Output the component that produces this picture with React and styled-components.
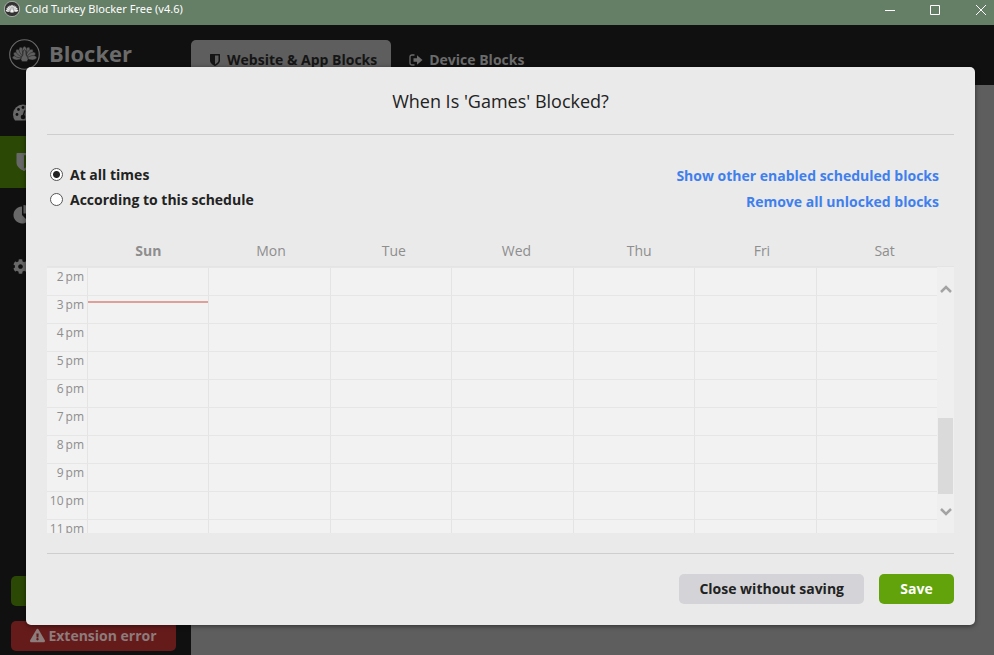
import React, { useState } from 'react';
import styled, { createGlobalStyle } from 'styled-components';
import { FaCog, FaExclamationTriangle } from 'react-icons/fa';

const GlobalStyle = createGlobalStyle`
  * { box-sizing: border-box; }
  body {
    margin: 0;
    font-family: 'Open Sans', 'Noto Sans', sans-serif;
    font-size: 14px;
    background: #5e5e5e;
  }
  button { font: inherit; border: 0; padding: 0; cursor: pointer; }
`;

const S = {
  Window: styled.div`
    display: flex;
    flex-direction: column;
    min-height: 100vh;
  `,
  TitleBar: styled.header`
    display: flex;
    align-items: center;
    height: 25px;
    padding: 0 6px 7px 4px;
    background: #657e66;
    color: #fff;
    font-family: 'Noto Sans', 'Open Sans', sans-serif;
    font-size: 11px;
  `,
  AppName: styled.span`
    flex: 1;
    margin-left: 5px;
    line-height: 18px;
  `,
  WindowButtons: styled.div`
    display: flex;
    gap: 31px;
  `,
  WindowButton: styled.button`
    display: flex;
    width: 14px;
    height: 14px;
    background: none;
    color: #fff;
  `,
  Body: styled.div`
    position: relative;
    display: flex;
    flex: 1;
  `,
  Sidebar: styled.aside`
    display: flex;
    flex-direction: column;
    width: 191px;
    background: #101010;
  `,
  Brand: styled.div`
    display: flex;
    align-items: center;
    gap: 9px;
    height: 59px;
    padding-left: 9px;
    color: #6b6b6b;
    font-size: 22px;
    font-weight: 700;
  `,
  BrandName: styled.span`
    padding-bottom: 4px;
  `,
  NavItem: styled.button`
    display: flex;
    align-items: center;
    height: 52px;
    padding-left: ${({ $active }) => ($active ? 16 : 13)}px;
    background: ${({ $active }) => ($active ? '#2b4804' : 'none')};
    color: #686868;
  `,
  SideActions: styled.div`
    display: flex;
    flex-direction: column;
    gap: 15px;
    margin-top: auto;
    padding: 16px 15px 4px 11px;
  `,
  SideButton: styled.button`
    display: flex;
    align-items: center;
    justify-content: center;
    gap: 3px;
    height: 30px;
    padding-bottom: 2px;
    border-radius: 5px;
    background: ${({ $danger }) => ($danger ? '#661b1b' : '#2b4804')};
    color: #8d7c7c;
    font-weight: 700;
  `,
  Main: styled.main`
    flex: 1;
  `,
  Tabs: styled.nav`
    display: flex;
    align-items: flex-end;
    height: 60px;
    background: #101010;
  `,
  Tab: styled.button`
    display: flex;
    align-items: center;
    gap: 6px;
    height: 45px;
    padding: 0 14px 6px 18px;
    border-radius: 5px 5px 0 0;
    background: ${({ $active }) => ($active ? '#5e5e5e' : 'none')};
    color: ${({ $active }) => ($active ? '#151515' : '#6b6b6b')};
    font-weight: 700;
  `,
  Overlay: styled.div`
    position: absolute;
    inset: 0;
    padding: 42px 19px 30px 26px;
  `,
  Modal: styled.section`
    padding: 0 21px 21px;
    border-radius: 5px;
    background: #eaeaea;
    box-shadow: 0 1px 5px rgba(0, 0, 0, 0.5);
    color: #222;
  `,
  Title: styled.h1`
    margin: 0;
    height: 68px;
    border-bottom: 1px solid #cecece;
    font-size: 18px;
    font-weight: 400;
    line-height: 68px;
    text-align: center;
  `,
  Options: styled.div`
    display: flex;
    justify-content: space-between;
    padding: 27px 15px 24px 3px;
    font-weight: 700;
  `,
  Choices: styled.div`
    display: flex;
    flex-direction: column;
  `,
  Choice: styled.label`
    display: flex;
    align-items: center;
    gap: 7px;
    line-height: 25px;
  `,
  Radio: styled.input`
    appearance: none;
    width: 13px;
    height: 13px;
    margin: 0;
    border: 1px solid #555;
    border-radius: 50%;
    background: #fff;
    &:checked {
      background: radial-gradient(circle, #222 0 3px, #fff 4px);
    }
  `,
  Links: styled.div`
    display: flex;
    flex-direction: column;
    align-items: flex-end;
    padding-top: 1px;
  `,
  Link: styled.a`
    color: #3f7fee;
    line-height: 26px;
    text-decoration: none;
  `,
  Days: styled.div`
    display: grid;
    grid-template-columns: repeat(7, 1fr);
    height: 27px;
    padding: 0 8px 0 40px;
    color: #8e8e8e;
    line-height: 24px;
    text-align: center;
  `,
  Day: styled.span`
    font-weight: ${({ $today }) => ($today ? 700 : 400)};
  `,
  Schedule: styled.div`
    display: flex;
    height: 267px;
    overflow: hidden;
    border-top: 1px solid #e4e4e4;
    background: #f2f2f2;
  `,
  Grid: styled.table`
    flex: 1;
    height: 280px;
    border-spacing: 0;
    table-layout: fixed;
  `,
  Hour: styled.th`
    width: 40px;
    height: 28px;
    padding: 0 3px 9px 0;
    border-top: 1px solid #e6e6e6;
    color: #8e8e8e;
    font-size: 12px;
    font-weight: 400;
    line-height: 18px;
    text-align: right;
    white-space: nowrap;
  `,
  Slot: styled.td`
    position: relative;
    padding: 0;
    border-top: 1px solid #e6e6e6;
    border-left: 1px solid #e4e4e4;
  `,
  NowLine: styled.div`
    position: absolute;
    top: 5px;
    left: 0;
    right: 0;
    height: 2px;
    background: #dfa09a;
  `,
  Scrollbar: styled.div`
    display: flex;
    flex-direction: column;
    align-items: center;
    width: 17px;
    padding: 16px 0;
    background: #efefef;
    color: #a3a3a3;
  `,
  Thumb: styled.div`
    width: 15px;
    height: 76px;
    margin: auto 0 11px;
    background: #dadada;
  `,
  Footer: styled.footer`
    display: flex;
    justify-content: flex-end;
    gap: 15px;
    margin-top: 20px;
    padding-top: 20px;
    border-top: 1px solid #cecece;
  `,
  Button: styled.button`
    height: 30px;
    min-width: 75px;
    padding: 0 20px 1px;
    border-radius: 5px;
    background: ${({ $primary }) => ($primary ? '#62a30b' : '#d4d4d8')};
    color: ${({ $primary }) => ($primary ? '#fff' : '#222')};
    font-weight: 700;
  `,
};

const feathers = [-84, -63, -42, -21, 21, 42, 63, 84, 0];

const Peacock = ({ size, disc, ring, fill }) => (
  <svg width={size} height={size} viewBox="0 0 30 30" aria-hidden="true">
    <circle cx="15" cy="15" r="14.3" fill={disc} stroke={ring} strokeWidth="1.1" />
    {feathers.map((angle) => (
      <path
        key={angle}
        d="M15 19 L12.800 10.500 Q12.400 7 15 6 Q17.600 7 17.200 10.500 Z"
        transform={`translate(0 1) rotate(${angle} 15 18)`}
        fill={fill}
        stroke={disc}
        strokeWidth="0.4"
      />
    ))}
    <path
      d="M15 10.500q2 .8 1.500 3.200q-.4 2 1.600 4q1.400 2.200-.6 4.300h-5q-2-2.100-.6-4.300q2-2 1.600-4q-.5-2.400 1.500-3.200z"
      fill={fill}
      stroke={disc}
      strokeWidth="0.6"
    />
  </svg>
);

const Shield = ({ width, height }) => (
  <svg width={width} height={height} viewBox="0 0 1280 1536" aria-hidden="true">
    <path
      fill="currentColor"
      d="M1088 832V192H640v1137q119-63 213-137 235-184 235-360zM1280 64v768q0 86-33 170t-83 150-118 128-127 103-121 77-89 50-43 20q-12 6-26 6t-26-6q-16-7-43-20t-89-50-121-77-127-103-118-128-83-150T0 832V64q0-26 19-45T64 0h1152q26 0 45 19t19 45z"
    />
  </svg>
);

const gaugeDots = [[4, 11], [5.500, 6], [10, 4], [14.500, 6], [16, 11]];

const Gauge = () => (
  <svg width="20" height="22" viewBox="0 0 20 22" aria-hidden="true">
    <g transform="translate(0 2)">
      <path d="M2 19.500Q0 16.500 0 13.500a10 10 0 0 1 20 0q0 3-2 6z" fill="currentColor" />
      <g transform="translate(0 2.500)" fill="#101010">
        {gaugeDots.map(([cx, cy]) => (
          <circle key={cx} cx={cx} cy={cy} r="1.400" />
        ))}
        <circle cx="10" cy="13.500" r="2.300" />
        <path d="M9.300 13L11.200 6.800l1.200.4L10.800 13.500z" />
      </g>
    </g>
  </svg>
);

const Pie = () => (
  <svg width="19" height="19" viewBox="0 0 19 19" aria-hidden="true">
    <path d="M9 1.500V10l6 6A8.500 8.500 0 1 1 9 1.500z" fill="currentColor" />
    <path d="M10.500 0A8.500 8.500 0 0 1 19 8.500H10.500z" fill="currentColor" />
  </svg>
);

const SignOut = () => (
  <svg width="14" height="12" viewBox="0 0 14 12" aria-hidden="true">
    <path d="M5.500 1H3Q1 1 1 3v6q0 2 2 2h2.500" fill="none" stroke="currentColor" strokeWidth="1.300" />
    <path d="M4.500 4.200H8V1.300L13.500 6L8 10.700V7.800H4.500z" fill="currentColor" />
  </svg>
);

const Chevron = ({ down }) => (
  <svg width="12" height="12" viewBox="0 0 12 12" aria-hidden="true">
    <path d={down ? 'M1 4l5 5 5-5' : 'M1 9l5-5 5 5'} fill="none" stroke="currentColor" strokeWidth="2.500" />
  </svg>
);

const windowIcons = [
  ['Minimize', 'M1 8.500h10'],
  ['Maximize', 'M1.500 3.500h9v9h-9z'],
  ['Close', 'M2 3l10 10M12 3L2 13'],
];

const navItems = [
  { label: 'Dashboard', icon: <Gauge /> },
  { label: 'Blocks', icon: <Shield width={16} height={18} />, active: true },
  { label: 'Statistics', icon: <Pie /> },
  { label: 'Settings', icon: <FaCog size={15} /> },
];

const days = ['Sun', 'Mon', 'Tue', 'Wed', 'Thu', 'Fri', 'Sat'];
const hours = [2, 3, 4, 5, 6, 7, 8, 9, 10, 11];

const App = () => {
  const [mode, setMode] = useState('always');

  return (
    <S.Window>
      <GlobalStyle />
      <S.TitleBar>
        <Peacock size={16} disc="#333" ring="#eee" fill="#f4f4f4" />
        <S.AppName>Cold Turkey Blocker Free (v4.6)</S.AppName>
        <S.WindowButtons>
          {windowIcons.map(([label, d]) => (
            <S.WindowButton key={label} type="button" aria-label={label}>
              <svg width="14" height="14" viewBox="0 0 14 14">
                <path d={d} fill="none" stroke="currentColor" />
              </svg>
            </S.WindowButton>
          ))}
        </S.WindowButtons>
      </S.TitleBar>

      <S.Body>
        <S.Sidebar>
          <S.Brand>
            <Peacock size={31} disc="#101010" ring="#6b6b6b" fill="#606060" />
            <S.BrandName>Blocker</S.BrandName>
          </S.Brand>
          {navItems.map(({ label, icon, active }) => (
            <S.NavItem key={label} type="button" aria-label={label} $active={active}>
              {icon}
            </S.NavItem>
          ))}
          <S.SideActions>
            <S.SideButton type="button" aria-label="Upgrade" />
            <S.SideButton type="button" $danger>
              <FaExclamationTriangle size={15} />
              Extension error
            </S.SideButton>
          </S.SideActions>
        </S.Sidebar>
        <S.Main>
          <S.Tabs>
            <S.Tab type="button" $active>
              <Shield width={12} height={12} />
              Website &amp; App Blocks
            </S.Tab>
            <S.Tab type="button">
              <SignOut />
              Device Blocks
            </S.Tab>
          </S.Tabs>
        </S.Main>

        <S.Overlay>
          <S.Modal role="dialog" aria-labelledby="modal-title">
            <S.Title id="modal-title">When Is 'Games' Blocked?</S.Title>
            <S.Options>
              <S.Choices>
                <S.Choice htmlFor="always">
                  <S.Radio type="radio" id="always" name="mode" checked={mode === 'always'} onChange={() => setMode('always')} />
                  At all times
                </S.Choice>
                <S.Choice htmlFor="schedule">
                  <S.Radio type="radio" id="schedule" name="mode" checked={mode === 'schedule'} onChange={() => setMode('schedule')} />
                  According to this schedule
                </S.Choice>
              </S.Choices>
              <S.Links>
                <S.Link href="#show">Show other enabled scheduled blocks</S.Link>
                <S.Link href="#remove">Remove all unlocked blocks</S.Link>
              </S.Links>
            </S.Options>

            <S.Days>
              {days.map((day) => (
                <S.Day key={day} $today={day === 'Sun'}>{day}</S.Day>
              ))}
            </S.Days>
            <S.Schedule>
              <S.Grid>
                <tbody>
                  {hours.map((hour) => (
                    <tr key={hour}>
                      <S.Hour scope="row">{hour}{'\u2009'}pm</S.Hour>
                      {days.map((day) => (
                        <S.Slot key={day}>
                          {hour === 3 && day === 'Sun' && <S.NowLine />}
                        </S.Slot>
                      ))}
                    </tr>
                  ))}
                </tbody>
              </S.Grid>
              <S.Scrollbar aria-hidden="true">
                <Chevron />
                <S.Thumb />
                <Chevron down />
              </S.Scrollbar>
            </S.Schedule>

            <S.Footer>
              <S.Button type="button">Close without saving</S.Button>
              <S.Button type="button" $primary>Save</S.Button>
            </S.Footer>
          </S.Modal>
        </S.Overlay>
      </S.Body>
    </S.Window>
  );
};

export default App;
